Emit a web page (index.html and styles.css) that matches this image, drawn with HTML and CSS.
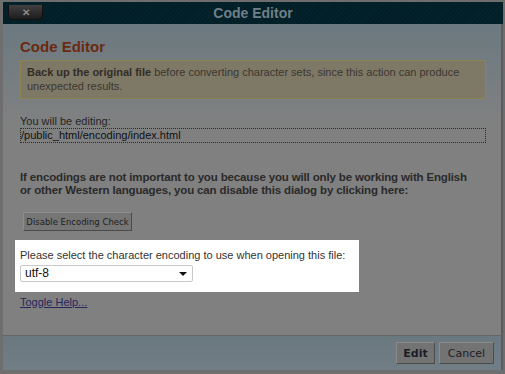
FILE: index.html
```html
<!DOCTYPE html>
<html lang="en">
<head>
    <meta charset="UTF-8">
    <title>Code Editor</title>
    <link rel="stylesheet" href="styles.css">
</head>
<body>
    <div class="dialog">
        <div class="titlebar">
            <button class="close">&#10005;</button>
            <span class="title">Code Editor</span>
        </div>
        <div class="content">
            <h2>Code Editor</h2>
            <div class="warning">
                <b>Back up the original file</b> before converting character sets, since this action can produce unexpected results.
            </div>
            <div class="label">You will be editing:</div>
            <div class="path">/public_html/encoding/index.html</div>
            <p class="note">If encodings are not important to you because you will only be working with English or other Western languages, you can disable this dialog by clicking here:</p>
            <button class="small-btn">Disable Encoding Check</button>
            <!-- bloque resaltado -->
            <div class="highlight">
                <div class="label">Please select the character encoding to use when opening this file:</div>
                <div class="select">utf-8<span class="arrow"></span></div>
            </div>
            <a class="toggle" href="#">Toggle Help...</a>
        </div>
        <div class="footer">
            <button class="btn bold">Edit</button>
            <button class="btn">Cancel</button>
        </div>
    </div>
</body>
</html>
```

FILE: styles.css
```css
body {
    margin: 0;
    background-color: #6e6e6e;
    font-family: 'Liberation Sans', Arial, sans-serif;
}
.dialog {
    width: 500px;
    height: 374px;
    margin-left: 3px;
    padding-top: 2px;
    box-sizing: border-box;
    display: flex;
    flex-direction: column;
}
.titlebar {
    height: 22px;
    background-color: #03212a;
    background-image: repeating-linear-gradient(135deg, #04232c 0, #04232c 1px, #021e27 1px, #021e27 3px);
    display: flex;
    align-items: center;
    justify-content: center;
    position: relative;
}
.title {
    color: #6f8088;
    font-weight: bold;
    font-size: 14px;
}
.close {
    position: absolute;
    left: 5px;
    top: 3px;
    width: 35px;
    height: 15px;
    border: 1px solid #111;
    border-top: none;
    border-radius: 0 0 5px 5px;
    background: linear-gradient(#414141, #1d1d1d);
    color: #8a8a8a;
    font-size: 10px;
    font-weight: bold;
    padding: 0;
    line-height: 13px;
}
.content {
    flex: 1;
    background: linear-gradient(#6b7980 0, #7e8081 90px, #808080 110px);
    border-right: 2px solid #5c5c5c;
    padding: 13px 15px 0 17px;
    border-bottom: 1px solid #666;
}
h2 {
    margin: 0 0 3px 0;
    font-size: 15px;
    color: #6b2a10;
    line-height: 20px;
}
.warning {
    background-color: #7e7966;
    border: 1px solid #8c8552;
    padding: 4px 7px 5px 6px;
    font-size: 11px;
    line-height: 14px;
    color: #3b3630;
}
.warning b {
    color: #332c26;
}
.label {
    font-size: 11px;
    color: #262626;
    line-height: 14px;
}
.content > .label {
    margin-top: 15px;
}
.path {
    border: 1px dotted #2a2a2a;
    font-size: 11px;
    color: #101010;
    line-height: 13px;
}
.note {
    margin: 28px 0 0 0;
    width: 460px;
    font-size: 11.5px;
    letter-spacing: -0.15px;
    font-weight: bold;
    line-height: 13px;
    color: #2a2a2a;
}
.small-btn {
    margin: 15px 0 0 3px;
    height: 19px;
    width: 109px;
    padding: 0;
    background-color: #767676;
    border: 1px solid;
    border-color: #8e8e8e #4a4a4a #4a4a4a #8e8e8e;
    font-family: 'DejaVu Sans', Verdana, sans-serif;
    font-size: 8.5px;
    color: #202020;
}
.highlight {
    background-color: white;
    margin: 9px 0 0 -5px;
    width: 334px;
    padding: 8px 5px 10px 5px;
}
.highlight .label {
    color: #333;
    line-height: 14px;
}
.select {
    margin-top: 3px;
    height: 15px;
    border: 1px solid #c8c8c8;
    border-radius: 2px;
    font-size: 12px;
    line-height: 15px;
    padding-left: 4px;
    color: #111;
    width: 167px;
    display: flex;
    justify-content: space-between;
    align-items: center;
}
.arrow {
    width: 0;
    height: 0;
    border-left: 4px solid transparent;
    border-right: 4px solid transparent;
    border-top: 4px solid #111;
    margin-right: 5px;
}
.toggle {
    display: inline-block;
    margin-top: 4px;
    font-size: 11px;
    color: #25265c;
}
.footer {
    height: 34px;
    background: linear-gradient(#6a7880, #727e85);
    border-right: 2px solid #5c5c5c;
    display: flex;
    justify-content: flex-end;
    align-items: center;
    gap: 4px;
    padding-right: 7px;
    margin-bottom: 4px;
}
.btn {
    height: 22px;
    padding: 0 8px;
    background-color: #737373;
    border: 1px solid;
    border-color: #8c8c8c #4c4c4c #4c4c4c #8c8c8c;
    font-family: 'DejaVu Sans', Verdana, sans-serif;
    font-size: 11px;
    color: #1c1c28;
}
.bold {
    font-weight: bold;
    padding: 0 6px;
}
```
